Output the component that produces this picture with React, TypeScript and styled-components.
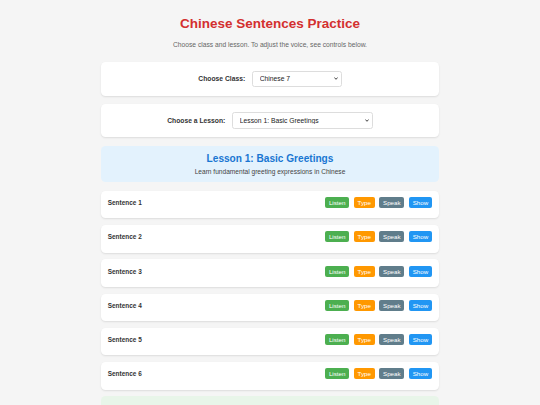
import React from "react";
import styled, { createGlobalStyle } from "styled-components";

const GlobalStyle = createGlobalStyle`
  html, body {
    margin: 0;
    padding: 0;
    background: #f5f5f5;
    font-family: "Liberation Sans", Arial, sans-serif;
    color: #333;
  }
  * { box-sizing: border-box; }
`;

const Page = styled.div`
  width: 338px;
  margin: 0 auto;
  padding: 16.3px 0 20px;
`;

const Title = styled.h1`
  margin: 0;
  font-size: 13.5px;
  line-height: 15.5px;
  font-weight: 700;
  color: #d32f2f;
  text-align: center;
`;

const Intro = styled.p`
  margin: 9.6px 0 13px;
  font-size: 6.7px;
  line-height: 7.7px;
  color: #666;
  text-align: center;
`;

const SelectCard = styled.div`
  background: #fff;
  border-radius: 4.5px;
  box-shadow: 0 1px 2px rgba(0, 0, 0, 0.1);
  padding: 8.5px;
  margin-bottom: 8.4px;
  display: flex;
  align-items: center;
  justify-content: center;
  gap: 6.5px;
`;

const Label = styled.label`
  font-size: 6.75px;
  line-height: 8px;
  font-weight: 700;
  color: #333;
`;

const SelectWrap = styled.div<{ $w: number }>`
  position: relative;
  width: ${(p) => p.$w}px;
  height: 16.5px;
`;

const Select = styled.select`
  display: block;
  appearance: none;
  -webkit-appearance: none;
  width: 100%;
  height: 100%;
  margin: 0;
  font-family: "Liberation Sans", Arial, sans-serif;
  font-size: 6.75px;
  padding: 0 12px 0 7px;
  border: 1px solid #ddd;
  border-radius: 2.5px;
  background: #fff;
  color: #222;
`;

const Chevron = styled.svg`
  position: absolute;
  right: 3.5px;
  top: 50%;
  width: 4px;
  height: 3px;
  margin-top: -1.5px;
  pointer-events: none;
`;

const LessonHeader = styled.div`
  background: #e3f2fd;
  border-radius: 4.5px;
  padding: 6.5px 8px 6px;
  margin-top: 8.6px;
  margin-bottom: 8.7px;
  text-align: center;
`;

const LessonTitle = styled.h2`
  margin: 0;
  font-size: 10.1px;
  line-height: 11.6px;
  font-weight: 700;
  color: #1976d2;
`;

const LessonDesc = styled.p`
  margin: 4.1px 0 0;
  font-size: 6.6px;
  line-height: 7.8px;
  color: #444;
`;

const SentenceCard = styled.div`
  background: #fff;
  border-radius: 4.5px;
  box-shadow: 0 1px 2px rgba(0, 0, 0, 0.1);
  padding: 6.3px 7px 10.3px 6.75px;
  margin-bottom: 6.7px;
`;

const SentenceRow = styled.div`
  display: flex;
  align-items: center;
  justify-content: space-between;
  height: 11px;
`;

const SentenceLabel = styled.span`
  font-size: 6.45px;
  font-weight: 700;
  color: #333;
`;

const Buttons = styled.div`
  display: flex;
  gap: 4.3px;
`;

const ActionButton = styled.button<{ $bg: string }>`
  font-family: "Liberation Sans", Arial, sans-serif;
  font-size: 6.2px;
  line-height: 7px;
  height: 11px;
  padding: 0 3.9px;
  border: none;
  border-radius: 2px;
  background: ${(p) => p.$bg};
  color: #fff;
  cursor: pointer;
`;

const VoiceBox = styled.div`
  background: #e8f5e9;
  border-radius: 4.5px;
  padding: 16px 8px 8px;
  margin-top: 1px;
  text-align: center;
`;

const VoiceTitle = styled.h3`
  margin: 0;
  font-size: 10px;
  color: #2e7d32;
`;

const buttons = [
  { label: "Listen", bg: "#4caf50" },
  { label: "Type", bg: "#ff9800" },
  { label: "Speak", bg: "#607d8b" },
  { label: "Show", bg: "#2196f3" },
];

function Dropdown({ width, value, label }: { width: number; value: string; label: string }) {
  return (
    <SelectWrap $w={width}>
      <Select defaultValue={value}>
        <option value={value}>{label}</option>
      </Select>
      <Chevron viewBox="0 0 4 3">
        <path d="M0.4 0.5 L2 2.3 L3.6 0.5" fill="none" stroke="#333" strokeWidth="0.9" />
      </Chevron>
    </SelectWrap>
  );
}

export default function App() {
  return (
    <>
      <GlobalStyle />
      <Page>
        <Title>Chinese Sentences Practice</Title>
        <Intro>Choose class and lesson. To adjust the voice, see controls below.</Intro>
        <SelectCard>
          <Label>Choose Class:</Label>
          <Dropdown width={90} value="c7" label="Chinese 7" />
        </SelectCard>
        <SelectCard>
          <Label>Choose a Lesson:</Label>
          <Dropdown width={141} value="l1" label="Lesson 1: Basic Greetings" />
        </SelectCard>
        <LessonHeader>
          <LessonTitle>Lesson 1: Basic Greetings</LessonTitle>
          <LessonDesc>Learn fundamental greeting expressions in Chinese</LessonDesc>
        </LessonHeader>
        {[1, 2, 3, 4, 5, 6].map((n) => (
          <SentenceCard key={n}>
            <SentenceRow>
              <SentenceLabel>Sentence {n}</SentenceLabel>
              <Buttons>
                {buttons.map((b) => (
                  <ActionButton key={b.label} $bg={b.bg}>
                    {b.label}
                  </ActionButton>
                ))}
              </Buttons>
            </SentenceRow>
          </SentenceCard>
        ))}
        <VoiceBox>
          <VoiceTitle>Voice Settings</VoiceTitle>
        </VoiceBox>
      </Page>
    </>
  );
}
